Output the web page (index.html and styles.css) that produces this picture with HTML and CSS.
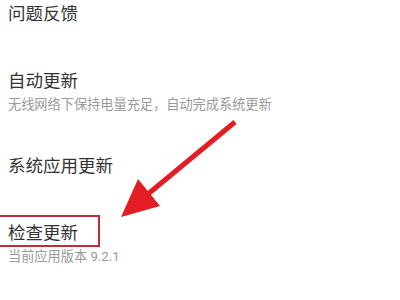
FILE: index.html
```html
<!DOCTYPE html>
<html lang="zh-CN">
<head>
  <meta charset="UTF-8">
  <meta name="viewport" content="width=device-width, initial-scale=1">
  <title>系统更新</title>
  <link rel="stylesheet" href="styles.css">
</head>
<body>
  <div class="list">
    <div class="item">
      <div class="title">问题反馈</div>
    </div>
    <div class="item has-sub">
      <div class="title">自动更新</div>
      <div class="sub">无线网络下保持电量充足，自动完成系统更新</div>
    </div>
    <div class="item">
      <div class="title">系统应用更新</div>
    </div>
    <div class="item has-sub">
      <div class="title marked">检查更新</div>
      <div class="sub">当前应用版本 9.2.1</div>
    </div>
  </div>

  <svg class="arrow" width="400" height="300" viewBox="0 0 400 300">
    <line x1="235" y1="122" x2="148" y2="194" stroke="#e41c24" stroke-width="5"/>
    <polygon points="121,217 138,179 160,206" fill="#e41c24"/>
  </svg>
</body>
</html>
```

FILE: styles.css
```css
body {
  margin: 0;
  background: #fff;
  color: #333;
  font-family: Roboto, "Noto Sans CJK SC", sans-serif;
  overflow: hidden;
}

.list {
  margin-top: -19px;
}

.item {
  padding: 21px 8px 22px;
}

.item.has-sub {
  padding-bottom: 19px;
}

.title {
  font-size: 17.5px;
  line-height: 24px;
}

.sub {
  margin-top: 3px;
  font-size: 13.2px;
  line-height: 18px;
  color: #9a9a9a;
  white-space: nowrap;
}

.marked {
  position: relative;
  display: inline-block;
}

.marked::before {
  content: "";
  position: absolute;
  left: -20px;
  top: -6px;
  width: 108px;
  height: 28px;
  border: 2px solid #c52b36;
}

.arrow {
  position: absolute;
  left: 0;
  top: 0;
}
```
